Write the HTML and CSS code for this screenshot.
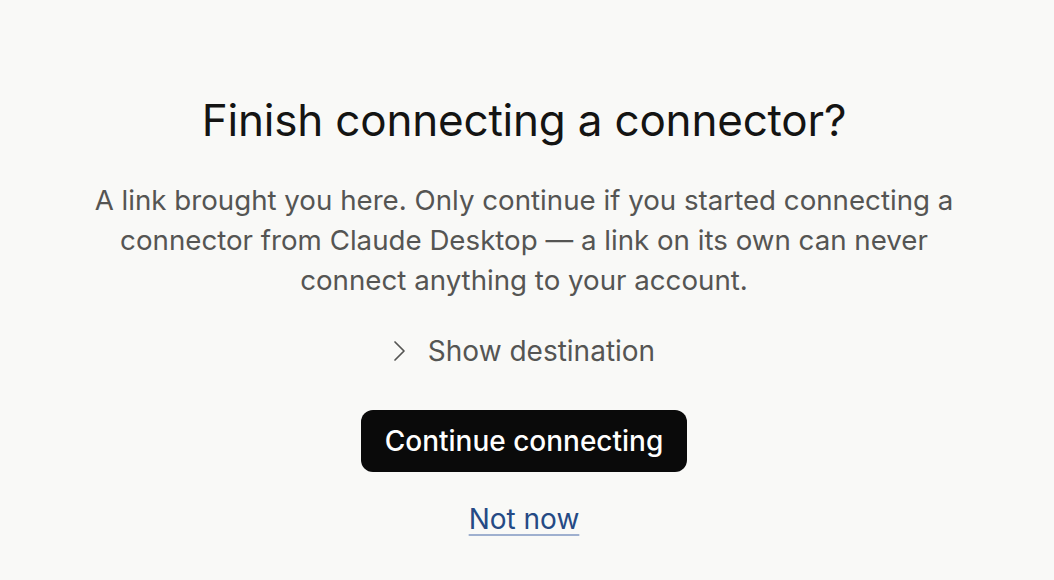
FILE: index.html
```html
<!DOCTYPE html>
<html lang="en">
<head>
	<meta charset="UTF-8">
	<title>Finish connecting a connector?</title>
	<link rel="stylesheet" href="styles.css">
</head>
<body>
<div class="page">
	<main class="confirm">
		<h1 class="title">Finish connecting a connector?</h1>
		<p class="desc">A link brought you here. Only continue if you started connecting a connector from Claude Desktop — a link on its own can never connect anything to your account.</p>
		<button class="toggle" type="button">
			<svg class="chevron" width="14" height="22" viewBox="0 0 14 22" fill="none">
				<path d="M2 2l9 9-9 9" stroke="currentColor" stroke-width="1.7" stroke-linecap="round" stroke-linejoin="round"/>
			</svg>
			<span>Show destination</span>
		</button>
		<button class="primary" type="button">Continue connecting</button>
		<a href="#" class="later">Not now</a>
	</main>
</div>
</body>
</html>
```

FILE: styles.css
```css
body,
p,
h1 {
	margin: 0;
}

html,
body {
	height: 100%;
}

body {
	background: #f9f9f7;
	font-family: Inter, "Noto Sans", sans-serif;
	color: #141413;
}

/* 整体内容稍微偏左，留出右侧滚动条的位置 */
.page {
	display: flex;
	justify-content: center;
	padding-top: 92px;
	padding-right: 6px;
}

.confirm {
	display: flex;
	flex-direction: column;
	align-items: center;
	width: 880px;
	text-align: center;
}

.title {
	font-size: 44px;
	font-weight: 400;
	line-height: 56px;
	letter-spacing: -0.2px;
}

.desc {
	margin-top: 32px;
	font-size: 27.7px;
	line-height: 40px;
	color: #555553;
}

.toggle {
	display: flex;
	align-items: center;
	gap: 21px;
	margin-top: 31px;
	padding: 0;
	border: 0;
	background: none;
	font: 28px/40px Inter, "Noto Sans", sans-serif;
	color: #555553;
	cursor: pointer;
}

.chevron {
	width: 14px;
	height: 22px;
}

.primary {
	margin-top: 39px;
	height: 62px;
	padding: 0 24px;
	border: 0;
	border-radius: 12px;
	background: #0a0a0a;
	font: 500 28px/62px Inter, "Noto Sans", sans-serif;
	color: #fff;
	cursor: pointer;
}

.later {
	margin-top: 27px;
	font-size: 28px;
	line-height: 40px;
	color: #254a85;
	text-decoration: underline;
	text-decoration-color: #9fb0cf;
	text-underline-offset: 5px;
	text-decoration-thickness: 1.5px;
}
```
